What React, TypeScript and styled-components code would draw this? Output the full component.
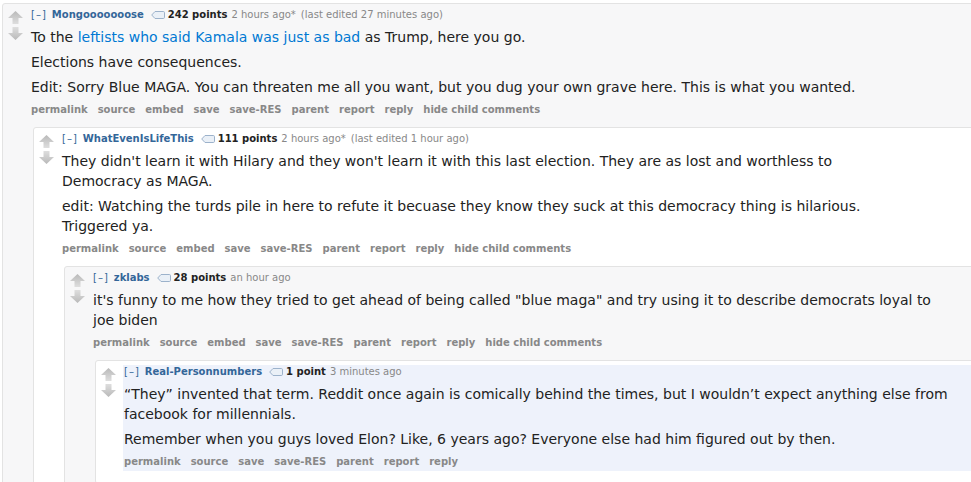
import React from "react";
import styled, { createGlobalStyle } from "styled-components";

const GlobalStyle = createGlobalStyle`
  html, body {
    margin: 0;
    padding: 0;
    background: #ffffff;
    overflow: hidden;
  }
  body {
    font-family: "DejaVu Sans", Verdana, Arial, sans-serif;
  }
`;

const Thread = styled.div`
  width: 1040px;
  padding: 3px 0 0 2px;
`;

const CommentBox = styled.div<{ $odd: boolean }>`
  display: flex;
  align-items: flex-start;
  background: ${(p) => (p.$odd ? "#f7f7f8" : "#ffffff")};
  border: 1px solid #e3e3e3;
  border-radius: 3px;
  padding: 4px 0 12px;
`;

const Midcol = styled.div`
  flex: none;
  width: 25px;
  padding-right: 2px;
  display: flex;
  flex-direction: column;
  align-items: center;
  gap: 3px;
  padding-top: 3px;
`;

const Body = styled.div`
  flex: 1;
  min-width: 0;
`;

const Entry = styled.div<{ $highlight?: boolean }>`
  padding: 0 0 1px 1px;
  background: ${(p) => (p.$highlight ? "#eef2fb" : "transparent")};
`;

const Tagline = styled.div`
  display: flex;
  align-items: center;
  font-size: 10px;
  line-height: 14px;
  color: #888888;
  white-space: nowrap;
`;

const Expand = styled.span`
  color: #369;
  letter-spacing: 1px;
  margin-right: 5px;
`;

const Author = styled.span`
  color: #369;
  font-weight: bold;
  margin-right: 7px;
`;

const Score = styled.span`
  color: #222222;
  font-weight: bold;
  margin: 0 4px 0 3px;
`;

const Edited = styled.span`
  margin-left: 5px;
`;

const Md = styled.div`
  display: flow-root;
  max-width: 840px;
  font-size: 14px;
  line-height: 20px;
  color: #222222;

  p {
    margin: 5px 0;
  }

  a {
    color: #0079d3;
    text-decoration: none;
  }
`;

const Buttons = styled.ul`
  display: flex;
  gap: 10px;
  list-style: none;
  margin: 0;
  padding: 0;
  font-size: 10px;
  line-height: 16px;
  font-weight: bold;
  color: #888888;
  white-space: nowrap;
`;

const Children = styled.div`
  margin-left: 3px;
  padding-top: 8px;
`;

function Arrow({ down }: { down?: boolean }) {
  const id = down ? "arrowDown" : "arrowUp";
  return (
    <svg width="15" height="13" viewBox="0 0 15 13">
      <defs>
        <linearGradient id={id} x1="0" y1={down ? "1" : "0"} x2="0" y2={down ? "0" : "1"}>
          <stop offset="0" stopColor="#b9b9b9" />
          <stop offset="1" stopColor="#dedede" />
        </linearGradient>
      </defs>
      <polygon
        points={
          down
            ? "7.5,13 15,6 10.5,6 10.5,0 4.5,0 4.5,6 0,6"
            : "7.5,0 15,7 10.5,7 10.5,13 4.5,13 4.5,7 0,7"
        }
        fill={`url(#${id})`}
      />
    </svg>
  );
}

function TagIcon() {
  return (
    <svg width="14" height="8" viewBox="0 0 14 8">
      <path
        d="M0.7 4 L4 0.5 H12.3 Q13.5 0.5 13.5 1.7 V6.3 Q13.5 7.5 12.3 7.5 H4 Z"
        fill="#eaf0f7"
        stroke="#9cb2cb"
        strokeWidth="1"
      />
    </svg>
  );
}

type CommentData = {
  author: string;
  points: string;
  time: string;
  edited?: string;
  body: React.ReactNode;
  buttons: string[];
  highlight?: boolean;
  replies?: CommentData[];
};

const allButtons = [
  "permalink",
  "source",
  "embed",
  "save",
  "save-RES",
  "parent",
  "report",
  "reply",
  "hide child comments",
];

const thread: CommentData = {
  author: "Mongooooooose",
  points: "242 points",
  time: "2 hours ago*",
  edited: "(last edited 27 minutes ago)",
  buttons: allButtons,
  body: (
    <>
      <p>
        To the <a href="#">leftists who said Kamala was just as bad</a> as Trump, here you go.
      </p>
      <p>Elections have consequences.</p>
      <p>
        Edit: Sorry Blue MAGA. You can threaten me all you want, but you dug your own grave
        here. This is what you wanted.
      </p>
    </>
  ),
  replies: [
    {
      author: "WhatEvenIsLifeThis",
      points: "111 points",
      time: "2 hours ago*",
      edited: "(last edited 1 hour ago)",
      buttons: allButtons,
      body: (
        <>
          <p>
            They didn't learn it with Hilary and they won't learn it with this last election.
            They are as lost and worthless to Democracy as MAGA.
          </p>
          <p>
            edit: Watching the turds pile in here to refute it becuase they know they suck at
            this democracy thing is hilarious. Triggered ya.
          </p>
        </>
      ),
      replies: [
        {
          author: "zklabs",
          points: "28 points",
          time: "an hour ago",
          buttons: allButtons,
          body: (
            <p>
              it's funny to me how they tried to get ahead of being called "blue maga" and try
              using it to describe democrats loyal to joe biden
            </p>
          ),
          replies: [
            {
              author: "Real-Personnumbers",
              points: "1 point",
              time: "3 minutes ago",
              highlight: true,
              buttons: ["permalink", "source", "save", "save-RES", "parent", "report", "reply"],
              body: (
                <>
                  <p>
                    “They” invented that term. Reddit once again is comically behind the times,
                    but I wouldn’t expect anything else from facebook for millennials.
                  </p>
                  <p>
                    Remember when you guys loved Elon? Like, 6 years ago? Everyone else had him
                    figured out by then.
                  </p>
                </>
              ),
            },
          ],
        },
      ],
    },
  ],
};

function Comment({ data, depth }: { data: CommentData; depth: number }) {
  return (
    <CommentBox $odd={depth % 2 === 0}>
      <Midcol>
        <Arrow />
        <Arrow down />
      </Midcol>
      <Body>
        <Entry $highlight={data.highlight}>
          <Tagline>
            <Expand>[–]</Expand>
            <Author>{data.author}</Author>
            <TagIcon />
            <Score>{data.points}</Score>
            <span>{data.time}</span>
            {data.edited && <Edited>{data.edited}</Edited>}
          </Tagline>
          <Md>{data.body}</Md>
          <Buttons>
            {data.buttons.map((b) => (
              <li key={b}>{b}</li>
            ))}
          </Buttons>
        </Entry>
        {data.replies && (
          <Children>
            {data.replies.map((r) => (
              <Comment key={r.author} data={r} depth={depth + 1} />
            ))}
          </Children>
        )}
      </Body>
    </CommentBox>
  );
}

export default function App() {
  return (
    <>
      <GlobalStyle />
      <Thread>
        <Comment data={thread} depth={0} />
      </Thread>
    </>
  );
}
